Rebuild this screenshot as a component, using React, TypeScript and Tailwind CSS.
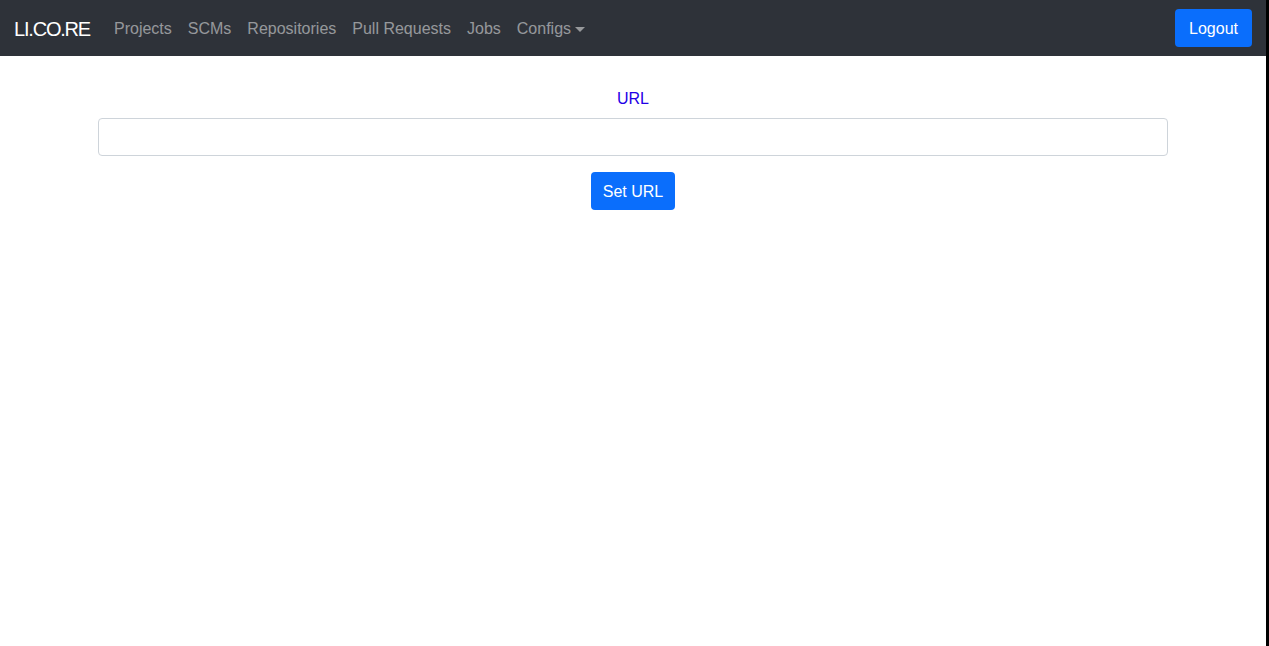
const NAV_LINKS = ['Projects', 'SCMs', 'Repositories', 'Pull Requests', 'Jobs'];

export default function App() {
  return (
    <div className="flex min-h-[646px] bg-black font-['Liberation_Sans',Arial,sans-serif]">
      <div className="flex-1 bg-white">
        {/* Navbar */}
        <nav className="flex h-[56px] items-center justify-between bg-[#2e3239] pl-[14px] pr-[14px]">
          <div className="flex items-center pt-[2px]">
            <a className="mr-[16px] text-[20px] leading-[30px] tracking-[-1.2px] text-white">LI.CO.RE</a>
            {NAV_LINKS.map((l) => (
              <a key={l} className="px-[8px] text-[16px] leading-[24px] text-white/50">
                {l}
              </a>
            ))}
            <a className="flex items-center px-[8px] text-[16px] leading-[24px] text-white/50">
              Configs
              <span className="ml-[4px] mt-[1px] h-0 w-0 border-x-[5px] border-t-[5px] border-x-transparent border-t-white/50" />
            </a>
          </div>
          <button className="h-[38px] rounded-[4px] bg-[#0a6efc] px-[14px] pt-[2px] text-[16px] text-white">
            Logout
          </button>
        </nav>

        {/* Form */}
        <div className="flex flex-col items-center px-[98px] pt-[31px]">
          <label className="text-[16px] leading-[24px] text-[#2200e6]">URL</label>
          <input
            type="text"
            className="mt-[7px] h-[38px] w-full rounded-[4px] border border-[#ced4da] bg-white px-[12px] text-[16px] outline-none"
          />
          <button className="mt-[16px] h-[38px] rounded-[4px] bg-[#0a6efc] px-[12px] pt-[2px] text-[16px] text-white">
            Set URL
          </button>
        </div>
      </div>
      <div className="w-[3px] bg-black" />
    </div>
  );
}
